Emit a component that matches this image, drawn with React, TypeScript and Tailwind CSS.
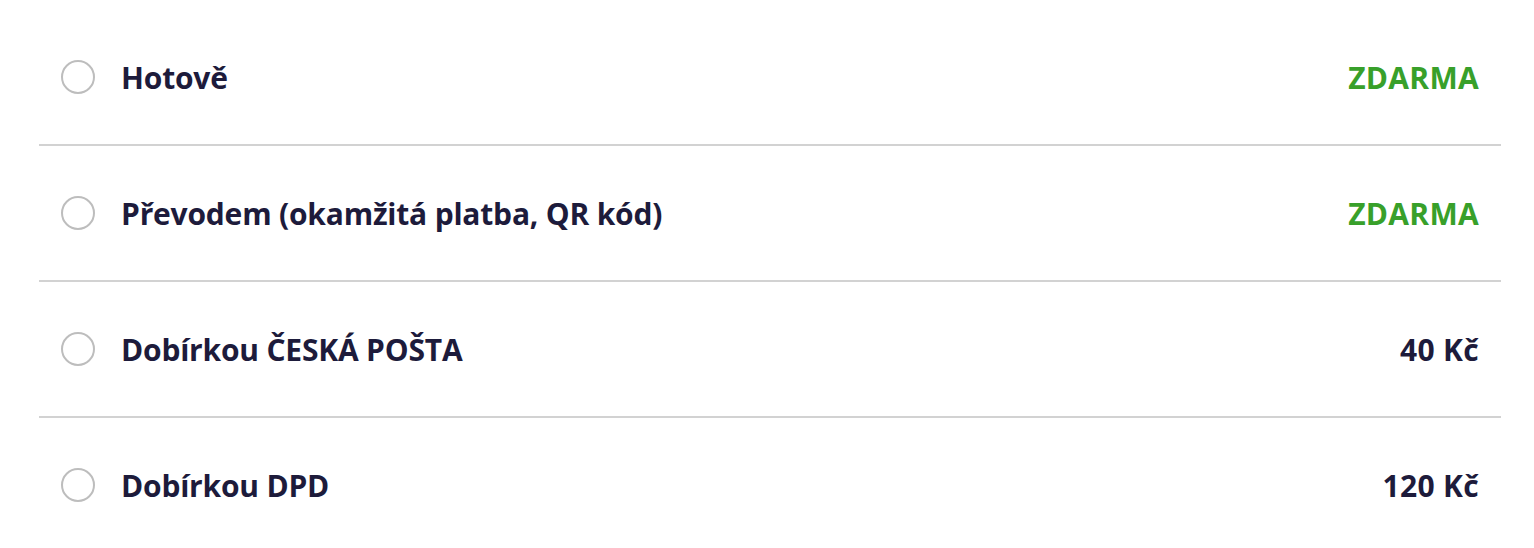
import React from "react";

const methods = [
  { label: "Hotově", price: "ZDARMA", free: true },
  { label: "Převodem (okamžitá platba, QR kód)", price: "ZDARMA", free: true },
  { label: "Dobírkou ČESKÁ POŠTA", price: "40 Kč", free: false },
  { label: "Dobírkou DPD", price: "120 Kč", free: false },
];

export default function App() {
  const [selected, setSelected] = React.useState<number | null>(null);
  return (
    <main className="bg-white w-full h-[548px] overflow-hidden pt-[10px] pl-[39px] pr-[33px] font-['Open_Sans','Noto_Sans',sans-serif]">
      {methods.map((m, i) => (
        <label
          key={m.label}
          onClick={() => setSelected(i)}
          className={`flex items-center h-[136px] shrink-0 pl-[22px] pr-[22px] cursor-pointer ${
            i < methods.length - 1 ? "border-b-2 border-[#d2d2d2]" : "pb-[2px]"
          }`}
        >
          <span className="w-[34px] h-[34px] rounded-full border-2 border-[#bdbdbd] flex items-center justify-center shrink-0">
            {selected === i && <span className="w-[16px] h-[16px] rounded-full bg-[#1d1b3b]" />}
          </span>
          <span className="ml-[26px] text-[30px] font-bold text-[#1d1b3b] tracking-[-0.2px]">{m.label}</span>
          <span
            className={`ml-auto text-[30px] font-bold tracking-[0.3px] ${
              m.free ? "text-[#38a02a]" : "text-[#1d1b3b]"
            }`}
          >
            {m.price}
          </span>
        </label>
      ))}
    </main>
  );
}
